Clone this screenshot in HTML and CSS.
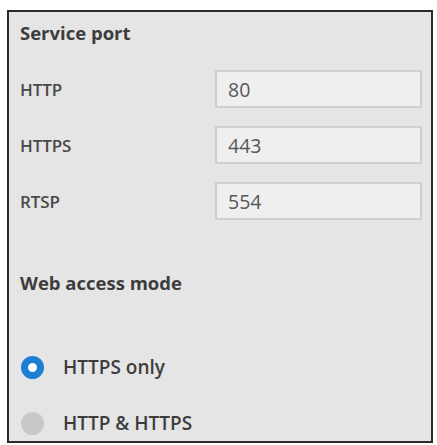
FILE: index.html
```html
<!DOCTYPE html>
<html lang="en">
<head>
    <meta charset="UTF-8">
    <meta name="viewport" content="width=device-width, initial-scale=1.0">
    <title>Service port</title>
    <link rel="stylesheet" href="styles.css">
</head>
<body>
    <div class="panel">
        <h2 class="section-title">Service port</h2>

        <div class="port-list">
            <div class="port-row">
                <label for="httpPort">HTTP</label>
                <div class="port-input" id="httpPort">80</div>
            </div>
            <div class="port-row">
                <label for="httpsPort">HTTPS</label>
                <div class="port-input" id="httpsPort">443</div>
            </div>
            <div class="port-row">
                <label for="rtspPort">RTSP</label>
                <div class="port-input" id="rtspPort">554</div>
            </div>
        </div>

        <h2 class="section-title access-title">Web access mode</h2>

        <div class="radio-list">
            <div class="radio-row">
                <span class="radio checked"></span>
                <span class="radio-label">HTTPS only</span>
            </div>
            <div class="radio-row">
                <span class="radio disabled"></span>
                <span class="radio-label">HTTP &amp; HTTPS</span>
            </div>
        </div>
    </div>
</body>
</html>
```

FILE: styles.css
```css
* {
    margin: 0;
    padding: 0;
    box-sizing: border-box;
    font-family: 'Open Sans', 'Liberation Sans', sans-serif;
}

body {
    background-color: #ffffff;
    width: 437px;
    height: 445px;
    overflow: hidden;
}

.panel {
    margin: 10px 4px 0 7px;
    height: 433px;
    border: 2px solid #2a2a2a;
    background-color: #e5e5e5;
    padding: 11px 9px 0 11px;
    display: flex;
    flex-direction: column;
}

.section-title {
    font-size: 18.5px;
    font-weight: 700;
    line-height: 20px;
    color: #3d3d3d;
}

.port-list {
    margin-top: 27px;
    display: flex;
    flex-direction: column;
    gap: 18px;
}

.port-row {
    display: flex;
    align-items: center;
    justify-content: space-between;
}

.port-row label {
    font-size: 17px;
    font-weight: 600;
    color: #484848;
    letter-spacing: -0.1px;
}

.port-input {
    width: 207px;
    height: 38px;
    border: 2px solid #cfcfcf;
    background-color: #efefef;
    padding: 0 11px;
    display: flex;
    align-items: center;
    font-size: 19.5px;
    color: #575757;
}

.access-title {
    margin-top: 53px;
}

.radio-list {
    margin-top: 62px;
    display: flex;
    flex-direction: column;
    gap: 32px;
}

.radio-row {
    display: flex;
    align-items: center;
    gap: 19px;
    height: 24px;
}

.radio {
    width: 23px;
    height: 23px;
    border-radius: 50%;
    margin-left: 1px;
}

.radio.checked {
    border: 7px solid #1c7fd3;
    background-color: #ffffff;
}

.radio.disabled {
    background-color: #c9c9c9;
}

.radio-label {
    font-size: 19px;
    font-weight: 600;
    color: #3d3d3d;
}
```
